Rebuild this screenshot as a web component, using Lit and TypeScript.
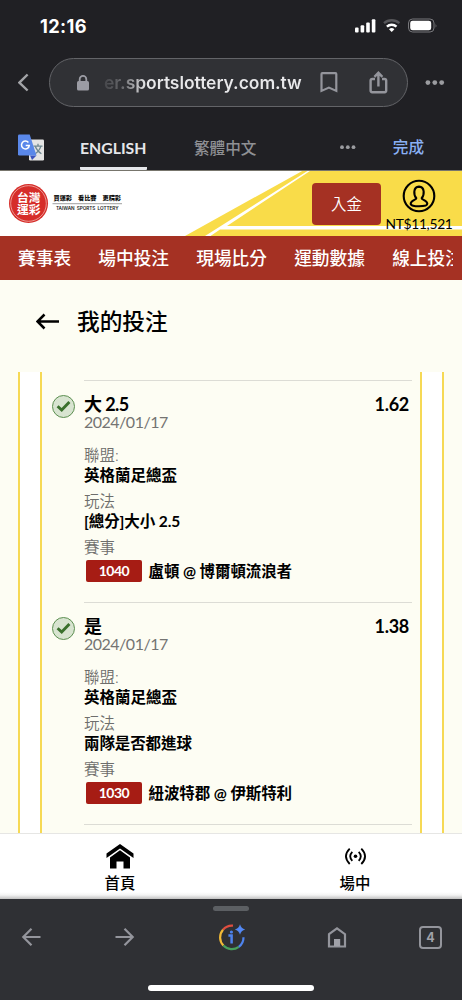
import { LitElement, html, css, svg } from "lit";
import { customElement, property } from "lit/decorators.js";

const tick = svg`
  <circle cx="11.5" cy="11.5" r="11" fill="#d8e4d0" stroke="#5c8f50" stroke-width="1"></circle>
  <path d="M5.6 11.2 9.7 15 17.4 7" fill="none" stroke="#3a702c" stroke-width="2.9"></path>`;

@customElement("status-bar")
class StatusBar extends LitElement {
  static styles = css`
    :host { display: flex; height: 50px; box-sizing: border-box; padding: 1px 24px 0 40px; align-items: center; justify-content: space-between; }
    .time { font: 700 18.2px/48px Inter, sans-serif; color: #fff; letter-spacing: 0.4px; }
    .signs { display: block; }
  `;
  render() {
    return html`
      <span class="time">12:16</span>
      <svg class="signs" width="84" height="16" viewBox="0 0 84 16" fill="#fff">
        <rect x="1" y="9.5" width="3.6" height="5" rx="1"></rect>
        <rect x="6.6" y="7.3" width="3.6" height="7.2" rx="1"></rect>
        <rect x="12.2" y="4.5" width="3.6" height="10" rx="1"></rect>
        <rect x="17.8" y="1.2" width="3.6" height="13.3" rx="1"></rect>
        <path d="M30 5.2a11.5 11.5 0 0 1 15.4 0" fill="none" stroke="#57575b" stroke-width="2.3"></path>
        <path d="M32.9 8.6a7.2 7.2 0 0 1 9.6 0" fill="none" stroke="#fff" stroke-width="2.4"></path>
        <path d="M35 11.2a4 4 0 0 1 5.4 0L37.7 14z"></path>
        <rect x="54.5" y="1" width="25.5" height="13" rx="4" fill="none" stroke="#77777b" stroke-width="1"></rect>
        <rect x="56.2" y="2.7" width="21" height="9.6" rx="2.4"></rect>
        <path d="M81.6 5.4q1.5 2 0 4.4z" fill="#77777b"></path>
      </svg>`;
  }
}

@customElement("address-bar")
class AddressBar extends LitElement {
  static styles = css`
    :host { display: flex; height: 65px; padding: 8px 0 0 18px; box-sizing: border-box; align-items: flex-start; }
    .back { margin-top: 15px; width: 31px; }
    .pill { width: 359px; height: 49px; box-sizing: border-box; border: 1px solid #636468; border-radius: 25px; background: #303135; display: flex; align-items: center; padding: 0 18px 0 26px; }
    .url { margin-left: 14px; width: 199px; white-space: nowrap; font: 600 17.5px/24px Inter, sans-serif; letter-spacing: -0.05px; background: linear-gradient(90deg, #45464a 0, #67686c 18px, #e8e8ea 42px); -webkit-background-clip: text; background-clip: text; color: transparent; }
    .mark { margin-left: 17px; }
    .share { margin-left: 31px; }
    .more { margin: 22px 0 0 17px; }
    svg { display: block; flex: none; }
  `;
  render() {
    return html`
      <svg class="back" width="31" height="20" viewBox="0 0 31 20"><path d="M9.6 1.5 1.4 9.6 9.6 17.5" fill="none" stroke="#a3a4a8" stroke-width="2.4"></path></svg>
      <div class="pill">
        <svg width="14" height="16" viewBox="0 0 14 16"><rect x="1" y="6" width="12" height="9.5" rx="1.6" fill="#9b9ca4"></rect><path d="M3.7 7V4.2a3.3 3.3 0 0 1 6.6 0V7" fill="none" stroke="#9b9ca4" stroke-width="1.8"></path></svg>
        <span class="url">er.sportslottery.com.tw</span>
        <svg class="mark" width="18" height="21" viewBox="0 0 18 21"><path d="M2.3 1.2h13.2q.8 0 .8.8v16.9L8.9 15.6 1.5 18.9V2q0-.8.8-.8z" fill="none" stroke="#94959c" stroke-width="2.2"></path></svg>
        <svg class="share" width="19" height="23" viewBox="0 0 19 23" fill="none" stroke="#94959c" stroke-width="2.4"><path d="M6 8H3.2Q1.6 8 1.6 9.6v10Q1.6 21.2 3.2 21.2h12.4q1.6 0 1.6-1.6v-10Q17.2 8 15.6 8H13M9.4 15.5V2M5.4 5.8l4-4 4 4"></path></svg>
      </div>
      <svg class="more" width="20" height="6" viewBox="0 0 20 6" fill="#9b9ca0"><circle cx="2.9" cy="2.6" r="2.4"></circle><circle cx="9.8" cy="2.6" r="2.4"></circle><circle cx="16.7" cy="2.6" r="2.4"></circle></svg>`;
  }
}

@customElement("translate-bar")
class TranslateBar extends LitElement {
  static styles = css`
    :host { display: flex; height: 55px; box-sizing: border-box; padding: 19px 38px 0 18px; align-items: flex-start; color: #8f9094; font: 500 15.6px/28px Roboto, "Noto Sans CJK TC", sans-serif; }
    .tab { margin-left: 36px; width: 67px; height: 36px; box-sizing: border-box; color: #e5e6ea; font-family: Lato, sans-serif; font-weight: 700; font-size: 15.8px; border-bottom: 3px solid #e5e6ea; border-radius: 1px; white-space: nowrap; }
    .zh { margin-left: 47px; width: 64px; line-height: 30px; }
    .more { margin: 11px 0 0 81px; }
    .done { margin-left: auto; color: #8ab0f4; }
    svg { display: block; flex: none; }
  `;
  render() {
    return html`
      <svg width="26" height="27" viewBox="0 0 26 27">
        <rect x="11" y="5.5" width="15" height="21" rx="1.2" fill="#e4e4e4"></rect>
        <path d="M12 21.5h6.5L14 26z" fill="#3b53bd"></path>
        <path d="M15.5 12.2h9M20 9.8v2.4M22.8 12.4q-1.6 5-6 7.6M17.4 12.8q2 4.8 6 7" fill="none" stroke="#6d8790" stroke-width="1.3"></path>
        <path d="M1.3.5H11.7L18.5 21.5H1.3Q0 21.5 0 20.2V1.8Q0 .5 1.3.5z" fill="#5a88ea"></path>
        <path d="M10.4 8.5A3.9 3.9 0 1 0 11.3 11.4H7.7" fill="none" stroke="#fff" stroke-width="1.5"></path>
      </svg>
      <span class="tab">ENGLISH</span>
      <span class="zh">繁體中文</span>
      <svg class="more" width="17" height="5" viewBox="0 0 17 5" fill="#9b9ca0"><circle cx="3" cy="2.2" r="1.9"></circle><circle cx="8.8" cy="2.2" r="1.9"></circle><circle cx="14.5" cy="2.2" r="1.9"></circle></svg>
      <span class="done">完成</span>`;
  }
}

@customElement("site-header")
class SiteHeader extends LitElement {
  static styles = css`
    :host { display: grid; height: 66px; grid-template: 66px / 462px; overflow: hidden; background: #fff; }
    .field, .row { grid-area: 1 / 1; display: block; }
    .row { display: flex; align-items: flex-start; }
    .logo { display: block; margin: 13px 0 0 9px; }
    .deposit { margin: 13px 0 0 188px; width: 69px; height: 42px; border-radius: 4px; background: #a53123; color: #fff; text-align: center; font: 350 15.4px/40px "Noto Sans CJK TC", sans-serif; }
    .account { margin-left: 3px; width: 70px; display: flex; flex-direction: column; align-items: center; padding-top: 9px; }
    .money { font: 400 13.8px/16px Lato, sans-serif; letter-spacing: -0.3px; color: #000; margin-top: 3px; white-space: nowrap; }
  `;
  render() {
    return html`
      <svg class="field" width="462" height="66" viewBox="0 0 462 66">
        <path d="M185 66 304 0H462V66z" fill="#f9dc49"></path>
        <path d="M205 66 309 0h2.5L227 56h235v3.5H220L210.5 66z" fill="#fff"></path>
        <path d="M0 .5H462" stroke="#77756c" stroke-width="1"></path>
      </svg>
      <div class="row">
        <svg class="logo" width="115" height="41" viewBox="0 0 115 41">
          <circle cx="19.5" cy="20.5" r="19.5" fill="#d62d29"></circle>
          <circle cx="19.5" cy="20.5" r="17.8" fill="none" stroke="#f5c4bd" stroke-width=".7"></circle>
          <g fill="#fff" font-family="Noto Sans CJK TC, sans-serif" font-size="11.8" font-weight="600">
            <text x="8" y="19">台灣</text><text x="8" y="31">運彩</text>
          </g>
          <g fill="#111" font-family="Noto Sans CJK TC, sans-serif" font-size="6.2" font-weight="900">
            <text x="44.5" y="17">買運彩</text><text x="69" y="17">看比賽</text><text x="93.5" y="17">更精彩</text>
          </g>
          <path d="M43.5 20.7h69.500" stroke="#777" stroke-width=".7"></path>
          <text x="47" y="26.7" fill="#222" font-family="Inter, sans-serif" font-size="4.7" font-weight="600" textLength="62.5">TAIWAN&#160; SPORTS&#160; LOTTERY</text>
        </svg>
        <div class="deposit">入金</div>
        <div class="account">
          <svg width="34" height="34" viewBox="0 0 34 34" fill="none" stroke="#000" stroke-width="2.1">
            <circle cx="17" cy="17" r="15.3"></circle>
            <path d="M14.3 19.3C11.5 16 11 8 17 7.6c6 .4 5.5 8.4 2.7 11.7-.2 1.6 5.6 1.7 5.6 5.5 0 1.9-3.7 2.5-8.3 2.5s-8.3-.6-8.3-2.5c0-3.8 5.8-3.9 5.6-5.5z"></path>
          </svg>
          <span class="money">NT$11,521</span>
        </div>
      </div>`;
  }
}

@customElement("site-nav")
class SiteNav extends LitElement {
  static styles = css`
    :host { display: block; height: 44px; background: #a53123; padding: 0 9px 0 18px; }
    .strip { display: flex; gap: 27.2px; overflow: hidden; white-space: nowrap; color: #fff; font: 500 17.7px/43px "Noto Sans CJK TC", sans-serif; height: 44px; }
  `;
  render() {
    return html`<div class="strip">${["賽事表", "場中投注", "現場比分", "運動數據", "線上投注"].map((t) => html`<span>${t}</span>`)}</div>`;
  }
}

interface Bet { pick: string; odds: string; date: string; league: string; play: string; code: string; match: string }

@customElement("bet-entry")
class BetEntry extends LitElement {
  @property({ attribute: false }) bet!: Bet;
  static styles = css`
    :host { display: flex; height: 222px; padding-left: 10px; box-sizing: border-box; font-family: Lato, "Noto Sans CJK TC", sans-serif; color: #000; }
    .tick { display: block; flex: none; margin-top: 15px; width: 32px; }
    .body { width: 328px; box-sizing: border-box; border-top: 1px solid #dcdcd5; padding-top: 13px; }
    .head { display: flex; justify-content: space-between; font-size: 18px; line-height: 20px; font-weight: 700; padding-right: 3px; }
    .pick { letter-spacing: -0.6px; }
    .odds { letter-spacing: -0.3px; }
    .date { font-size: 16px; line-height: 17px; color: #747472; margin: -1px 0 16px; letter-spacing: -0.5px; }
    .label { font-size: 15.5px; line-height: 19px; color: #6e6e6c; font-weight: 350; }
    .value { font-size: 15.5px; line-height: 20px; font-weight: 700; margin-bottom: 7px; white-space: nowrap; }
    .play { letter-spacing: -0.1px; }
    .game { display: flex; align-items: center; margin: 3px 0 0 2px; font-size: 15.5px; line-height: 22px; font-weight: 700; white-space: nowrap; letter-spacing: -0.1px; }
    .code { width: 56px; height: 22px; margin-right: 6.5px; border-radius: 2px; background: #a61c14; color: #fff; text-align: center; font-size: 14px; letter-spacing: -0.5px; }
  `;
  render() {
    const b = this.bet;
    return html`
      <svg class="tick" width="32" height="23" viewBox="0 0 32 23">${tick}</svg>
      <div class="body">
        <div class="head"><span class="pick">${b.pick}</span><span class="odds">${b.odds}</span></div>
        <div class="date">${b.date}</div>
        <div class="label">聯盟:</div>
        <div class="value">${b.league}</div>
        <div class="label">玩法</div>
        <div class="value play">${b.play}</div>
        <div class="label">賽事</div>
        <div class="game"><span class="code">${b.code}</span><span>${b.match}</span></div>
      </div>`;
  }
}

@customElement("bet-page")
class BetPage extends LitElement {
  static styles = css`
    :host { display: block; height: 553px; overflow: hidden; background: #fdfdf3; }
    .title { display: flex; align-items: center; height: 82px; padding-left: 36px; font: 500 22.7px/82px "Noto Sans CJK TC", sans-serif; color: #000; }
    .title svg { display: block; margin-right: 17px; }
    .outer { margin: 10px 18px 0 18px; width: 426px; height: 461px; box-sizing: border-box; border: solid #f6d955; border-width: 0 2px; background: #fff; padding: 0 20px; }
    .inner { height: 461px; box-sizing: border-box; border: solid #f6d955; border-width: 0 2px; background: #fdfdf3; padding-top: 8px; overflow: hidden; }
    .rule { height: 1px; width: 328px; margin-left: 42px; background: #dcdcd5; }
  `;
  bets: Bet[] = [
    { pick: "大 2.5", odds: "1.62", date: "2024/01/17", league: "英格蘭足總盃", play: "[總分]大小 2.5", code: "1040", match: "盧頓 @ 博爾頓流浪者" },
    { pick: "是", odds: "1.38", date: "2024/01/17", league: "英格蘭足總盃", play: "兩隊是否都進球", code: "1030", match: "紐波特郡 @ 伊斯特利" },
  ];
  render() {
    return html`
      <div class="title">
        <svg width="24" height="17" viewBox="0 0 24 17"><path d="M23 8.5H2M8.5 1.5 1.5 8.5 8.5 15.5" fill="none" stroke="#000" stroke-width="2.5"></path></svg>
        <span>我的投注</span>
      </div>
      <div class="outer"><div class="inner">
        ${this.bets.map((b) => html`<bet-entry .bet=${b}></bet-entry>`)}
        <div class="rule"></div>
      </div></div>`;
  }
}

@customElement("site-tabs")
class SiteTabs extends LitElement {
  static styles = css`
    :host { display: grid; grid-template-columns: 240px 230px; height: 66px; box-sizing: border-box; border-top: 1px solid #e6e6e4; background: linear-gradient(#fff 0 58px, #f4f4f4 61px, #c0c0c0 65px); overflow: hidden; color: #000; }
    .tab { display: flex; flex-direction: column; align-items: center; padding-top: 10px; font: 500 15.4px/22px "Noto Sans CJK TC", sans-serif; }
    svg { display: block; margin-bottom: 1px; }
  `;
  render() {
    return html`
      <div class="tab">
        <svg width="28" height="26" viewBox="0 0 28 26"><path d="M14 0 27.5 9.6V14L14 4.5.5 14V9.6z"></path><path d="M14 6.2 24 13.4V24.5H17.5V17.5H10.5V24.5H4V13.4z"></path></svg>
        <span>首頁</span>
      </div>
      <div class="tab">
        <svg width="22" height="26" viewBox="0 0 22 26" fill="none" stroke="#000" stroke-width="1.8"><path d="M5.7 4.6q-7.5 7.7 0 15.4M17.3 4.6q7.5 7.7 0 15.4M8.3 7.8q-4.2 4.5 0 9M14.7 7.8q4.2 4.5 0 9"></path><circle cx="11.5" cy="12.3" r="1.8" fill="#000" stroke="none"></circle></svg>
        <span>場中</span>
      </div>`;
  }
}

@customElement("browser-dock")
class BrowserDock extends LitElement {
  static styles = css`
    :host { display: flex; flex-direction: column; align-items: center; height: 101px; background: #2f3034; }
    .grip { width: 36px; height: 5px; margin-top: 7px; border-radius: 3px; background: #5c5f63; }
    .tools { display: flex; width: 462px; height: 30px; margin-top: 11px; align-items: center; box-sizing: border-box; padding-left: 21px; }
    .home-line { width: 166px; height: 6px; border-radius: 3px; background: #fff; margin-top: 33px; }
    svg { display: block; flex: none; }
    .next { margin-left: 74px; }
    .lens { margin-left: 83px; }
    .house { margin-left: 81px; }
    .count { margin-left: 72px; width: 23px; height: 23px; box-sizing: border-box; border: 2px solid #94959c; border-radius: 4px; color: #a0a1a8; text-align: center; font: 700 12.5px/19px Inter, sans-serif; }
  `;
  render() {
    return html`
      <div class="grip"></div>
      <div class="tools">
        <svg width="20" height="20" viewBox="0 0 20 20"><path d="M19.5 10H2.5M10.5 1.8 2.3 10l8.2 8.2" fill="none" stroke="#94959c" stroke-width="2.2"></path></svg>
        <svg class="next" width="20" height="20" viewBox="0 0 20 20"><path d="M.5 10H17.5M9.5 1.8 17.7 10l-8.2 8.2" fill="none" stroke="#94959c" stroke-width="2.2"></path></svg>
        <svg class="lens" width="28" height="28" viewBox="0 0 28 28" fill="none" stroke-width="2.2">
          <path d="M5 6.7A11.8 11.8 0 0 1 15 2.6" stroke="#df4e40"></path>
          <path d="M5 6.7A11.8 11.8 0 0 0 5.4 22.6" stroke="#f2ba36"></path>
          <path d="M5.4 22.6A11.8 11.8 0 0 0 20.8 23.8" stroke="#48a15c"></path>
          <path d="M20.8 23.8A11.8 11.8 0 0 0 25.5 14.2" stroke="#4e83ed"></path>
          <path d="M10.4 12.6h3.2V20.500" stroke="#4e83ed" stroke-width="2.5"></path><circle cx="13.4" cy="9" r="1.6" fill="#4e83ed" stroke="none"></circle>
          <path d="M22 1.3q1.2 4.2 5.2 5.2-4 1-5.2 5.2-1.2-4.2-5.2-5.2 4-1 5.2-5.2z" fill="#5388f4"></path>
        </svg>
        <svg class="house" width="20" height="23" viewBox="0 0 20 23"><path d="M2 8.2 10 2.3 18 8.2V20.5H2z" fill="none" stroke="#94959c" stroke-width="2.2"></path><rect x="7" y="13" width="6.2" height="7" fill="#a0a1a8"></rect></svg>
        <span class="count">4</span>
      </div>
      <div class="home-line"></div>`;
  }
}

@customElement("app-root")
class AppRoot extends LitElement {
  static styles = css`
    :host { display: block; width: 462px; height: 1000px; overflow: hidden; background: #202024; }
  `;
  render() {
    return html`
      <status-bar></status-bar>
      <address-bar></address-bar>
      <translate-bar></translate-bar>
      <site-header></site-header>
      <site-nav></site-nav>
      <bet-page></bet-page>
      <site-tabs></site-tabs>
      <browser-dock></browser-dock>`;
  }
}
